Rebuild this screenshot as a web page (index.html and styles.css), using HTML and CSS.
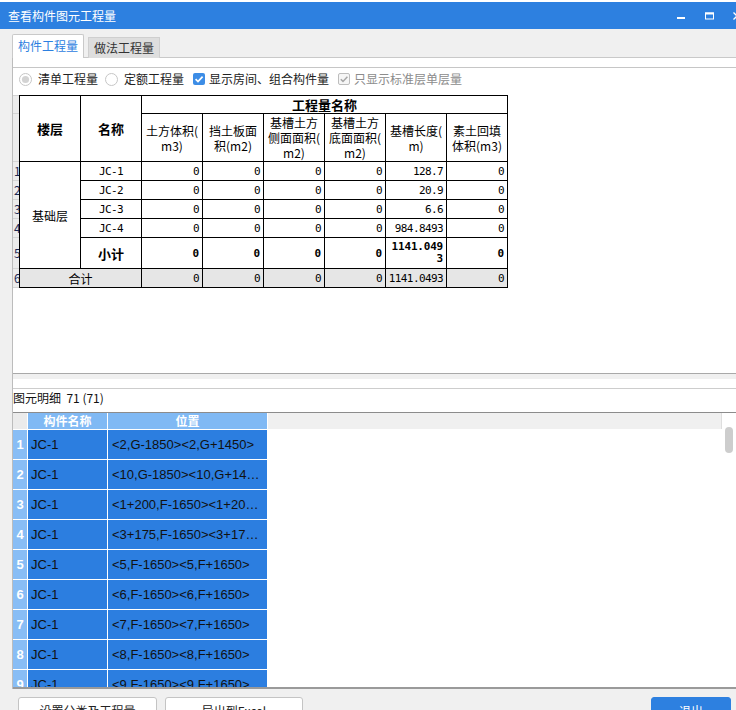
FILE: index.html
```html
<!DOCTYPE html>
<html lang="zh-CN">
<head>
<meta charset="utf-8">
<title>查看构件图元工程量</title>
<link rel="stylesheet" href="styles.css">
</head>
<body>
<div class="backdrop"></div>
<div class="titlebar">
  <span class="title">查看构件图元工程量</span>
  <div class="controls">
    <svg class="ctl" width="28" height="27" viewBox="0 0 28 27"><rect x="10" y="15" width="8" height="2" fill="#fff"/></svg>
    <svg class="ctl" width="28" height="27" viewBox="0 0 28 27"><rect x="10.5" y="11" width="8" height="6" fill="none" stroke="#fff" stroke-width="1"/><rect x="10" y="10.5" width="9" height="2" fill="#fff"/></svg>
    <svg class="ctl" width="28" height="27" viewBox="0 0 28 27"><path d="M10.5 10.5 L17.5 17.5 M17.5 10.5 L10.5 17.5" stroke="#fff" stroke-width="1.3"/></svg>
  </div>
</div>
<div class="tabs">
  <div class="tab active">构件工程量</div>
  <div class="tab">做法工程量</div>
</div>
<div class="page">
  <div class="upper">
    <div class="options">
      <label class="opt gap6 mr7">
        <svg width="13" height="13" viewBox="0 0 13 13"><circle cx="6.5" cy="6.5" r="6" fill="#fff" stroke="#c6c6c6"/><circle cx="6.5" cy="6.5" r="3.6" fill="#d3d3d3"/></svg>
        <span>清单工程量</span>
      </label>
      <label class="opt gap6 mr9">
        <svg width="13" height="13" viewBox="0 0 13 13"><circle cx="6.5" cy="6.5" r="6" fill="#fff" stroke="#c6c6c6"/></svg>
        <span>定额工程量</span>
      </label>
      <label class="opt gap4 mr9">
        <svg width="12" height="12" viewBox="0 0 12 12"><rect x="0" y="0" width="12" height="12" rx="2" fill="#3d8de6"/><path d="M2.6 6.2 L5 8.6 L9.6 3.6" fill="none" stroke="#fff" stroke-width="1.7"/></svg>
        <span>显示房间、组合构件量</span>
      </label>
      <label class="opt gap4 disabled">
        <svg width="12" height="12" viewBox="0 0 12 12"><rect x="0.5" y="0.5" width="11" height="11" rx="1.5" fill="#f6f6f6" stroke="#bdbdbd"/><path d="M2.8 6.2 L5 8.4 L9.4 3.8" fill="none" stroke="#a6a6a6" stroke-width="1.5"/></svg>
        <span>只显示标准层单层量</span>
      </label>
    </div>
    <div class="sheet">
      <div class="rownums">
        <div class="rn"></div>
        <div class="rn"></div>
        <div class="rn">1</div>
        <div class="rn">2</div>
        <div class="rn">3</div>
        <div class="rn">4</div>
        <div class="rn">5</div>
        <div class="rn">6</div>
      </div>
      <div class="qty">
        <div class="c hb rs2">楼层</div>
        <div class="c hb rs2">名称</div>
        <div class="c hb cs6">工程量名称</div>
        <div class="c hs">土方体积(<br>m3)</div>
        <div class="c hs">挡土板面<br>积(m2)</div>
        <div class="c hs">基槽土方<br>侧面面积(<br>m2)</div>
        <div class="c hs">基槽土方<br>底面面积(<br>m2)</div>
        <div class="c hs">基槽长度(<br>m)</div>
        <div class="c hs">素土回填<br>体积(m3)</div>

        <div class="c floor rs5">基础层</div>
        <div class="c m">JC-1</div>
        <div class="c n">0</div><div class="c n">0</div><div class="c n">0</div><div class="c n">0</div><div class="c n">128.7</div><div class="c n">0</div>
        <div class="c m">JC-2</div>
        <div class="c n">0</div><div class="c n">0</div><div class="c n">0</div><div class="c n">0</div><div class="c n">20.9</div><div class="c n">0</div>
        <div class="c m">JC-3</div>
        <div class="c n">0</div><div class="c n">0</div><div class="c n">0</div><div class="c n">0</div><div class="c n">6.6</div><div class="c n">0</div>
        <div class="c m">JC-4</div>
        <div class="c n">0</div><div class="c n">0</div><div class="c n">0</div><div class="c n">0</div><div class="c n">984.8493</div><div class="c n">0</div>
        <div class="c sub">小计</div>
        <div class="c n b">0</div><div class="c n b">0</div><div class="c n b">0</div><div class="c n b">0</div><div class="c n b wrap">1141.049<br>3</div><div class="c n b">0</div>

        <div class="c g cs2 total">合计</div>
        <div class="c n g">0</div><div class="c n g">0</div><div class="c n g">0</div><div class="c n g">0</div><div class="c n g">1141.0493</div><div class="c n g">0</div>
      </div>
    </div>
  </div>
  <div class="split"></div>
  <div class="hbar"></div>
  <div class="dlabel">图元明细&nbsp;&nbsp;71 (71)</div>
  <div class="detail">
    <div class="grid">
      <div class="corner"></div>
      <div class="gh">构件名称</div>
      <div class="gh">位置</div>
      <div class="ghfill"></div>

      <div class="ri">1</div><div class="gc">JC-1</div><div class="gc pos">&lt;2,G-1850&gt;&lt;2,G+1450&gt;</div><div class="gf"></div>
      <div class="ri">2</div><div class="gc">JC-1</div><div class="gc pos">&lt;10,G-1850&gt;&lt;10,G+1450&gt;</div><div class="gf"></div>
      <div class="ri">3</div><div class="gc">JC-1</div><div class="gc pos">&lt;1+200,F-1650&gt;&lt;1+200,F+1650&gt;</div><div class="gf"></div>
      <div class="ri">4</div><div class="gc">JC-1</div><div class="gc pos">&lt;3+175,F-1650&gt;&lt;3+175,F+1650&gt;</div><div class="gf"></div>
      <div class="ri">5</div><div class="gc">JC-1</div><div class="gc pos">&lt;5,F-1650&gt;&lt;5,F+1650&gt;</div><div class="gf"></div>
      <div class="ri">6</div><div class="gc">JC-1</div><div class="gc pos">&lt;6,F-1650&gt;&lt;6,F+1650&gt;</div><div class="gf"></div>
      <div class="ri">7</div><div class="gc">JC-1</div><div class="gc pos">&lt;7,F-1650&gt;&lt;7,F+1650&gt;</div><div class="gf"></div>
      <div class="ri">8</div><div class="gc">JC-1</div><div class="gc pos">&lt;8,F-1650&gt;&lt;8,F+1650&gt;</div><div class="gf"></div>
      <div class="ri">9</div><div class="gc">JC-1</div><div class="gc pos">&lt;9,F-1650&gt;&lt;9,F+1650&gt;</div><div class="gf"></div>
    </div>
    <div class="vscroll"><div class="thumb"></div></div>
  </div>
</div>
<div class="buttons">
  <div class="btn w139">设置分类及工程量</div>
  <div class="btn w138">导出到Excel</div>
  <div class="btn primary">退出</div>
</div>
</body>
</html>
```

FILE: styles.css
```css
* { box-sizing: border-box; }
html, body { margin: 0; padding: 0; overflow: hidden; }
body {
  width: 736px;
  height: 710px;
  background: #f0f0f0;
  font-family: "Noto Sans CJK SC", "Noto Sans", sans-serif;
  font-size: 12px;
  color: #000;
}

.backdrop { height: 2px; background: #fff; }

.titlebar {
  height: 27px;
  background: #2d80e0;
  display: flex;
  align-items: center;
  padding-left: 8px;
  color: #fff;
}
.title { flex: 1; font-size: 12px; line-height: 16px; }
.controls { display: flex; flex: none; margin-right: -15px; }
.ctl { display: block; }

.tabs {
  display: flex;
  align-items: flex-end;
  gap: 4px;
  padding-left: 12px;
  margin-top: 5px;
  height: 24px;
  margin-bottom: -1px;
}
.tab {
  height: 21px;
  width: 72px;
  padding: 0 5px;
  background: #dedede;
  border: 1px solid #cfcfcf;
  border-bottom: none;
  color: #333;
  line-height: 19px;
}
.tab.active {
  position: relative;
  z-index: 1;
  height: 24px;
  background: #fff;
  color: #2d80e0;
  border-color: #c9c9c9;
  border-radius: 2px 2px 0 0;
  line-height: 22px;
}

.page {
  margin-left: 12px;
  background: #fff;
  border-top: 1px solid #c9c9c9;
  border-left: 1px solid #bcbcbc;
  padding-top: 9px;
}

.upper {
  height: 307px;
  border-top: 1px solid #c6c6c6;
  border-bottom: 1px solid #a9a9a9;
}

.options {
  height: 22px;
  display: flex;
  align-items: center;
  padding-left: 6px;
  color: #222;
}
.opt { display: flex; align-items: center; line-height: 16px; }
.opt svg { display: block; flex: none; }
.gap6 { gap: 6px; }
.gap4 { gap: 4px; }
.mr7 { margin-right: 7px; }
.mr9 { margin-right: 9px; }
.opt.disabled { color: #8c8c8c; }

.sheet { display: flex; margin-top: 5px; }

.rownums, .qty {
  display: grid;
  grid-template-rows: 17px 47px 18px 18px 18px 18px 30px 18px;
  gap: 1px;
  padding: 1px 0;
}
.rownums {
  width: 6px;
  background: #d4d4d4;
  grid-template-columns: 6px;
}
.rn {
  background: #ececec;
  overflow: hidden;
  color: #1d2a55;
  font-size: 12px;
  line-height: 18px;
  padding-left: 1px;
  display: flex;
  align-items: center;
}

.qty {
  background: #000;
  padding: 1px;
  grid-template-columns: repeat(8, 60px);
}
.c {
  background: #fff;
  display: flex;
  align-items: center;
  justify-content: center;
  text-align: center;
  overflow: hidden;
}
.rs2 { grid-row: span 2; }
.rs5 { grid-row: span 5; }
.cs2 { grid-column: span 2; }
.cs6 { grid-column: span 6; }
.hb { font-weight: bold; font-size: 13px; }
.hs { font-size: 12px; line-height: 15px; }
.floor { font-size: 12px; }
.m, .n {
  font-family: "DejaVu Sans Mono", "Liberation Mono", monospace;
  font-size: 11px;
  letter-spacing: -0.6px;
}
.n { justify-content: flex-end; text-align: right; padding-right: 3px; }
.b { font-weight: bold; letter-spacing: -0.2px; }
.wrap { line-height: 12px; }
.sub { font-weight: bold; font-size: 13px; }
.g { background: #e6e6e6; }
.total { font-size: 12px; }

.split { height: 5px; background: #f0f0f0; }
.hbar { height: 10px; background: #fff; border-bottom: 1px solid #cdcdcd; }
.dlabel { height: 23px; line-height: 18px; color: #111; font-size: 12px; }

.detail {
  display: flex;
  height: 277px;
  border-top: 1px solid #8c8c8c;
  border-bottom: 2px solid #9a9a9a;
}
.grid {
  flex: 1;
  display: grid;
  grid-template-columns: 14px 79px 159px 1fr;
  grid-template-rows: 16px;
  grid-auto-rows: 29px;
  gap: 1px;
  background: #fff;
  overflow: hidden;
  align-content: start;
}
.corner { background: #ebebeb; }
.gh {
  background: #80b9f4;
  color: #fff;
  font-weight: bold;
  font-size: 12px;
  line-height: 16px;
  text-align: center;
}
.ghfill { background: #f0f0f0; border-right: 1px solid #dedede; }
.ri {
  background: #88bdf5;
  color: #fff;
  font-family: "Liberation Sans", Arial, sans-serif;
  font-weight: bold;
  font-size: 13px;
  display: flex;
  align-items: center;
  justify-content: center;
}
.gc {
  background: #2c7ee0;
  color: #111;
  font-family: "Liberation Sans", Arial, sans-serif;
  font-size: 13px;
  line-height: 29px;
  padding-left: 3px;
  white-space: nowrap;
  overflow: hidden;
  text-overflow: ellipsis;
}
.gc.pos { padding-left: 4px; padding-right: 3px; }
.gf { background: #fff; }

.vscroll { width: 14px; flex: none; background: #fff; padding: 14px 0 0 3px; }
.thumb { width: 8px; height: 26px; border-radius: 4px; background: #cdcdcd; }

.buttons {
  display: flex;
  gap: 8px;
  margin-top: 8px;
  padding: 0 5px 0 18px;
}
.btn {
  height: 27px;
  border: 1px solid #c4c4c4;
  border-radius: 3px;
  background: #fff;
  color: #222;
  font-size: 12px;
  line-height: 25px;
  text-align: center;
}
.w139 { width: 139px; }
.w138 { width: 138px; }
.btn.primary {
  margin-left: auto;
  width: 80px;
  background: #2d80e0;
  border-color: #2d80e0;
  color: #fff;
}
```
